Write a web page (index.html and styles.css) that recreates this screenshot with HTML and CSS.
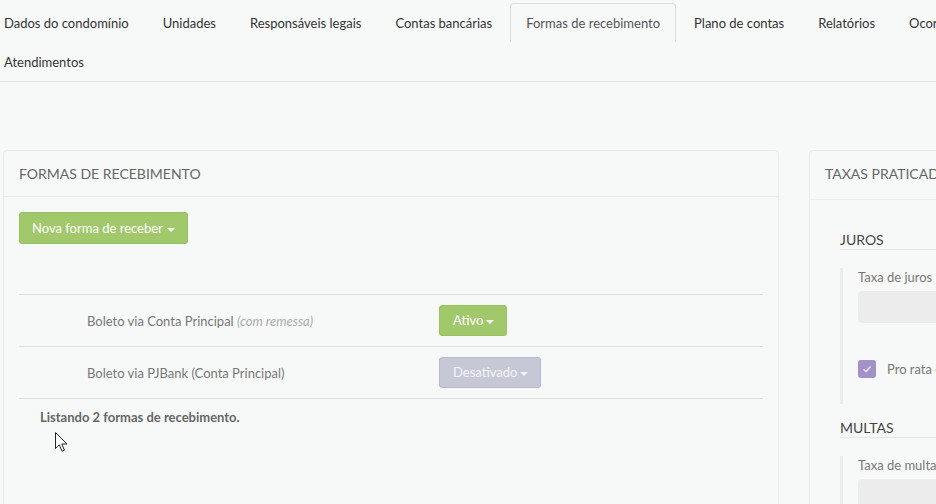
FILE: index.html
```html
<!DOCTYPE html>
<html lang="pt-BR">
<head>
    <meta charset="UTF-8">
    <meta name="viewport" content="width=device-width, initial-scale=1.0">
    <title>Formas de recebimento</title>
    <link rel="stylesheet" href="styles.css">
</head>
<body>
    <div class="page">

        <!-- Abas do condomínio -->
        <ul class="nav-tabs">
            <li><a href="#">Dados do condomínio</a></li>
            <li><a href="#">Unidades</a></li>
            <li><a href="#">Responsáveis legais</a></li>
            <li><a href="#">Contas bancárias</a></li>
            <li class="active"><a href="#">Formas de recebimento</a></li>
            <li><a href="#">Plano de contas</a></li>
            <li><a href="#">Relatórios</a></li>
            <li><a href="#">Ocorrências</a></li>
            <li><a href="#">Atendimentos</a></li>
        </ul>

        <div class="content">
            <!-- Formas de recebimento -->
            <div class="panel panel-main">
                <div class="panel-heading">Formas de recebimento</div>
                <div class="panel-body">
                    <button class="btn btn-success">Nova forma de receber <span class="caret"></span></button>

                    <table class="list">
                        <tbody>
                            <tr>
                                <td class="col-icon"></td>
                                <td class="col-name">Boleto via Conta Principal <em>(com remessa)</em></td>
                                <td><button class="btn btn-success btn-status">Ativo <span class="caret"></span></button></td>
                            </tr>
                            <tr>
                                <td class="col-icon"></td>
                                <td class="col-name">Boleto via PJBank (Conta Principal)</td>
                                <td><button class="btn btn-off btn-status">Desativado <span class="caret"></span></button></td>
                            </tr>
                        </tbody>
                    </table>
                    <p class="list-footer">Listando 2 formas de recebimento.</p>
                </div>
            </div>

            <!-- Taxas -->
            <div class="panel panel-side">
                <div class="panel-heading">Taxas praticadas</div>
                <div class="panel-body side-body">
                    <h4 class="section-title">Juros</h4>
                    <div class="field-group">
                        <label class="field-label">Taxa de juros mensal</label>
                        <div class="field-input"></div>
                        <div class="check-row">
                            <span class="check">
                                <svg width="10" height="10" viewBox="0 0 10 10"><path d="M1.5 5.2 L4 7.6 L8.6 2.4" fill="none" stroke="#e6e0f2" stroke-width="1.5"/></svg>
                            </span>
                            <span>Pro rata dia</span>
                        </div>
                    </div>

                    <h4 class="section-title">Multas</h4>
                    <div class="field-group">
                        <label class="field-label">Taxa de multa</label>
                        <div class="field-input"></div>
                    </div>
                </div>
            </div>
        </div>

        <!-- ponteiro do mouse -->
        <svg class="cursor" width="14" height="21" viewBox="0 0 14 21">
            <path d="M0.5 0.5 L0.5 16.5 L4.3 12.8 L7 19.2 L9.4 18.2 L6.8 12 L12 12 Z" fill="#fff" stroke="#222" stroke-width="1" stroke-linejoin="round"/>
        </svg>
    </div>
</body>
</html>
```

FILE: styles.css
```css
html, body {
    margin: 0;
    padding: 0;
    overflow: hidden;
}

body {
    font-family: Lato, "Open Sans", Arial, sans-serif;
    background-color: #f7f9f9;
    color: #333;
    font-size: 13px;
}

.page {
    position: relative;
    width: 1080px;
    height: 504px;
    overflow: hidden;
}

/* Abas */
.nav-tabs {
    list-style: none;
    display: flex;
    flex-wrap: wrap;
    margin: 0 0 0 -12px;
    padding: 3px 0 0 0;
    border-bottom: 1px solid #e2e4e4;
}

.nav-tabs li a {
    display: block;
    padding: 10px 15px 8px;
    line-height: 19px;
    margin-right: 2px;
    border: 1px solid transparent;
    border-radius: 4px 4px 0 0;
    color: #333;
    text-decoration: none;
}

.nav-tabs li.active a {
    border-color: #dcdede #dcdede transparent;
    color: #555;
    background-color: #f7f9f9;
}

/* Painéis */
.content {
    display: flex;
    gap: 30px;
    padding-left: 3px;
    margin-top: 68px;
    align-items: flex-start;
}

.panel {
    flex-shrink: 0;
    border: 1px solid #e8ebeb;
    border-radius: 4px;
    background-color: #f7f9f9;
}

.panel-main {
    width: 774px;
    height: 400px;
}

.panel-side {
    width: 300px;
    height: 400px;
}

.panel-heading {
    padding: 13px 15px;
    line-height: 19px;
    font-size: 14px;
    text-transform: uppercase;
    color: #666;
    border-bottom: 1px solid #e8ebeb;
}

.panel-side .panel-heading {
    padding-bottom: 16px;
    border-bottom-color: #ebeef0;
}

.panel-body {
    padding: 15px;
}

/* Botões */
.btn {
    font-family: inherit;
    font-size: 13px;
    line-height: 18px;
    padding: 6px 12px;
    border: 1px solid transparent;
    border-radius: 3px;
    color: #fff;
    cursor: pointer;
}

.btn-success {
    background-color: #a1c96b;
    border-color: #99c262;
}

.btn-off {
    background-color: #c6c8d6;
    border-color: #b7bacb;
    color: #f4f4f8;
}

.btn-status {
    padding: 6px 12px 6px 13px;
    line-height: 17px;
}

.btn-status .caret {
    margin-left: -1px;
}

.caret {
    display: inline-block;
    width: 0;
    height: 0;
    margin-left: 1px;
    vertical-align: middle;
    border-top: 4px solid;
    border-left: 4px solid transparent;
    border-right: 4px solid transparent;
}

/* Lista */
.list {
    width: 100%;
    border-collapse: collapse;
    margin-top: 50px;
}

.list td {
    border-top: 1px solid #dddfdf;
    border-bottom: 1px solid #dddfdf;
    height: 51px;
    padding: 0;
    vertical-align: middle;
    color: #777;
}

.list .col-icon {
    width: 68px;
}

.list .col-name {
    width: 352px;
}

.list em {
    color: #aaa;
    font-size: 13px;
}

.list-footer {
    margin: 10px 0 0 21px;
    font-size: 13px;
    font-weight: bold;
    color: #666;
}

/* Taxas */
.side-body {
    padding: 31px 0 0 30px;
}

.section-title {
    margin: 0 0 18px 0;
    font-size: 14px;
    font-weight: normal;
    line-height: 18px;
    text-transform: uppercase;
    color: #444;
    border-bottom: 1px solid #e4e6e6;
}

.field-group {
    border-left: 3px solid #ebeded;
    padding: 0 0 26px 15px;
    margin-bottom: 15px;
}

.field-group:last-child {
    margin-bottom: 0;
}

.field-label {
    display: block;
    font-size: 13px;
    line-height: 18px;
    color: #777;
}

.field-input {
    height: 32px;
    margin-top: 5px;
    background-color: #ececec;
    border-radius: 4px;
}

.check-row {
    display: flex;
    align-items: center;
    gap: 11px;
    margin-top: 37px;
    color: #777;
}

.check {
    width: 18px;
    height: 18px;
    border-radius: 3px;
    background-color: #a391c7;
    display: flex;
    align-items: center;
    justify-content: center;
}

.cursor {
    position: absolute;
    left: 55px;
    top: 432px;
}
```
